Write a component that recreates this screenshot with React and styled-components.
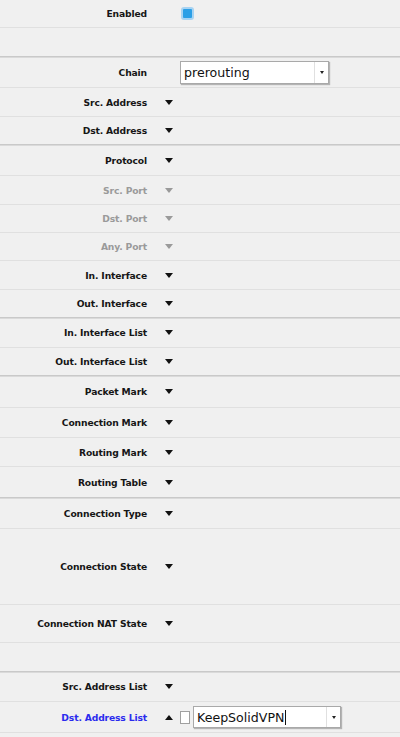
import React from "react";
import styled, { createGlobalStyle, css } from "styled-components";

const Global = createGlobalStyle`
  html, body { margin: 0; padding: 0; background: #f0f0f0; }
  body { font-family: "DejaVu Sans", sans-serif; }
`;

const Page = styled.div`
  width: 400px;
  min-height: 737px;
  background: #f0f0f0;
  display: flex;
  flex-direction: column;
`;

const Row = styled.div`
  box-sizing: border-box;
  height: ${(p) => p.$h}px;
  display: flex;
  align-items: center;
  border-bottom: 1px solid ${(p) => (p.$section ? "#c9c9c9" : "#e0e0e0")};
  ${(p) =>
    p.$section &&
    css`
      box-shadow: 0 1px 0 #dadada;
      position: relative;
      z-index: 1;
    `}
`;

const Label = styled.div`
  width: 147px;
  flex: none;
  text-align: right;
  font-family: "DejaVu Sans", Verdana, sans-serif;
  font-weight: bold;
  font-size: 9.2px;
  letter-spacing: -0.15px;
  color: ${(p) => (p.$tone === "disabled" ? "#9a9a9a" : p.$tone === "active" ? "#2b2bee" : "#161616")};
  white-space: nowrap;
`;

const ArrowSlot = styled.div`
  width: 33px;
  flex: none;
  box-sizing: border-box;
  padding-left: 18px;
  display: flex;
  align-items: center;
`;

const Arrow = styled.span`
  width: 0;
  height: 0;
  border-left: 4px solid transparent;
  border-right: 4px solid transparent;
  ${(p) =>
    p.$up
      ? css`border-bottom: 5px solid #111;`
      : css`border-top: 5px solid ${p.$disabled ? "#9a9a9a" : "#111"};`}
`;

const Controls = styled.div`
  display: flex;
  align-items: center;
  gap: 3px;
`;

const BlueCheck = styled.span`
  box-sizing: border-box;
  width: 13px;
  height: 13px;
  margin-left: 1px;
  border: 2px solid #a8d3f2;
  border-radius: 3px;
  background: #2b9fe6;
`;

const PlainCheck = styled.span`
  box-sizing: border-box;
  width: 10px;
  height: 13px;
  border: 1px solid #a0a0a0;
  background: #fff;
`;

const Select = styled.div`
  box-sizing: border-box;
  width: ${(p) => p.$w}px;
  height: ${(p) => p.$hh}px;
  display: flex;
  align-items: stretch;
  background: #fff;
  border: 1px solid #a9a9a9;
  box-shadow: 1px 1px 1px rgba(0, 0, 0, 0.25);
`;

const SelectText = styled.div`
  flex: 1;
  display: flex;
  align-items: center;
  padding-left: 3px;
  font-family: "DejaVu Sans", sans-serif;
  font-size: 12.6px;
  color: #111;
  white-space: nowrap;
`;

const Caret = styled.span`
  display: inline-block;
  width: 1px;
  height: 15px;
  background: #111;
  margin-left: 1px;
`;

const DropBtn = styled.div`
  width: 13px;
  flex: none;
  border-left: 1px solid #e0e0e0;
  display: flex;
  align-items: center;
  justify-content: center;
  &::after {
    content: "";
    border-left: 2.5px solid transparent;
    border-right: 2.5px solid transparent;
    border-top: 3px solid #222;
  }
`;

const rows = [
  { h: 28, label: "Enabled", kind: "enabled" },
  { h: 29, label: "", kind: "empty", section: true },
  { h: 31, label: "Chain", kind: "chain" },
  { h: 29, label: "Src. Address" },
  { h: 28, label: "Dst. Address", section: true },
  { h: 31, label: "Protocol" },
  { h: 29, label: "Src. Port", disabled: true },
  { h: 28, label: "Dst. Port", disabled: true },
  { h: 28, label: "Any. Port", disabled: true },
  { h: 29, label: "In. Interface" },
  { h: 28, label: "Out. Interface", section: true },
  { h: 30, label: "In. Interface List" },
  { h: 28, label: "Out. Interface List", section: true },
  { h: 32, label: "Packet Mark" },
  { h: 30, label: "Connection Mark" },
  { h: 29, label: "Routing Mark" },
  { h: 31, label: "Routing Table", section: true },
  { h: 31, label: "Connection Type" },
  { h: 76, label: "Connection State" },
  { h: 38, label: "Connection NAT State" },
  { h: 29, label: "", kind: "empty", section: true },
  { h: 30, label: "Src. Address List" },
  { h: 31, label: "Dst. Address List", kind: "dstlist" },
];

function FieldRow({ r }) {
  const tone = r.disabled ? "disabled" : r.kind === "dstlist" ? "active" : "normal";
  return (
    <Row $h={r.h} $section={r.section}>
      <Label $tone={tone}>{r.label}</Label>
      {r.kind === "enabled" && (
        <>
          <ArrowSlot />
          <BlueCheck />
        </>
      )}
      {r.kind === "chain" && (
        <>
          <ArrowSlot />
          <Select $w={149} $hh={23}>
            <SelectText>prerouting</SelectText>
            <DropBtn />
          </Select>
        </>
      )}
      {r.kind === "dstlist" && (
        <>
          <ArrowSlot>
            <Arrow $up />
          </ArrowSlot>
          <Controls>
            <PlainCheck />
            <Select $w={148} $hh={22}>
              <SelectText>
                KeepSolidVPN
                <Caret />
              </SelectText>
              <DropBtn />
            </Select>
          </Controls>
        </>
      )}
      {!r.kind && (
        <ArrowSlot>
          <Arrow $disabled={r.disabled} />
        </ArrowSlot>
      )}
    </Row>
  );
}

export default function App() {
  return (
    <>
      <Global />
      <Page>
        {rows.map((r, i) => (
          <FieldRow key={i} r={r} />
        ))}
      </Page>
    </>
  );
}
